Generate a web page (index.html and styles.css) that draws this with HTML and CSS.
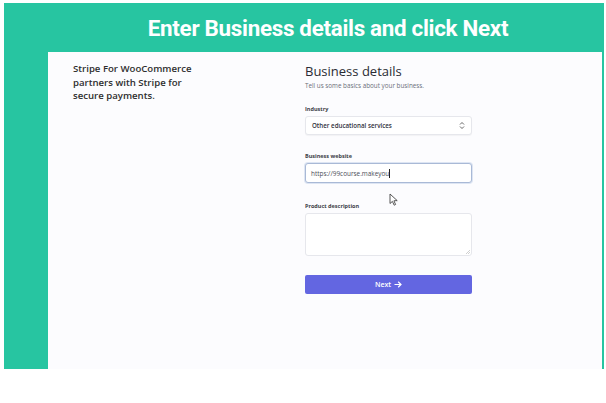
FILE: index.html
```html
<!DOCTYPE html>
<html lang="en">
<head>
    <meta charset="UTF-8">
    <title>Business details</title>
    <link rel="stylesheet" href="styles.css">
</head>
<body>
    <div class="frame">
        <!-- Banner -->
        <div class="banner">Enter Business details and click Next</div>

        <div class="frame-body">
            <div class="panel">
                <!-- Left column -->
                <div class="intro">
                    Stripe For WooCommerce partners with Stripe for secure payments.
                </div>

                <!-- Form -->
                <div class="form">
                    <h1 class="form-title">Business details</h1>
                    <p class="form-sub">Tell us some basics about your business.</p>

                    <label class="field-label">Industry</label>
                    <div class="select-box">
                        <span>Other educational services</span>
                        <svg class="select-arrows" width="6" height="9" viewBox="0 0 6 9">
                            <path d="M1 3.5 L3 1.5 L5 3.5 M1 5.5 L3 7.5 L5 5.5" fill="none" stroke="#555" stroke-width="0.9"/>
                        </svg>
                    </div>

                    <label class="field-label">Business website</label>
                    <div class="text-box focused">
                        <span>https://99course.makeyou</span><span class="caret"></span>
                    </div>

                    <label class="field-label">Product description</label>
                    <div class="text-area">
                        <svg class="grip" width="5" height="5" viewBox="0 0 5 5">
                            <path d="M1 5 L5 1 M3 5 L5 3" stroke="#bbb" stroke-width="0.7"/>
                        </svg>
                    </div>

                    <button class="next-button">Next
                        <svg width="8" height="7" viewBox="0 0 8 7">
                            <path d="M0.5 3.5 H7 M4.2 0.8 L7 3.5 L4.2 6.2" fill="none" stroke="#fff" stroke-width="1.2"/>
                        </svg>
                    </button>
                </div>

                <!-- Mouse pointer -->
                <svg class="pointer" width="10" height="13" viewBox="0 0 10 13">
                    <path d="M1 1 L1 10.5 L3.4 8.4 L5.2 12.2 L6.6 11.5 L4.9 7.8 L8.2 7.6 Z" fill="#fff" stroke="#444" stroke-width="0.9" stroke-linejoin="round"/>
                </svg>
            </div>
        </div>
    </div>
</body>
</html>
```

FILE: styles.css
```css
body {
    margin: 0;
    background-color: #ffffff;
    font-family: 'Open Sans', 'Noto Sans', sans-serif;
}
.frame {
    margin: 3px 0 0 4px;
    width: 600px;
    height: 366px;
    background-color: #27c5a1;
    display: flex;
    flex-direction: column;
}
.banner {
    height: 49px;
    display: flex;
    align-items: center;
    justify-content: center;
    padding-left: 48px;
    color: #ffffff;
    font-family: Roboto, 'Liberation Sans', sans-serif;
    font-weight: 700;
    font-size: 22.4px;
    letter-spacing: -0.3px;
    box-sizing: border-box;
}
.frame-body {
    flex: 1;
    display: flex;
    padding: 0 2px 0 44px;
}
.panel {
    flex: 1;
    position: relative; /* for the pointer */
    display: flex;
    background-color: #fcfcfe;
    padding: 10px 0 0 25px;
}
.intro {
    width: 125px;
    font-size: 9.6px;
    font-weight: 600;
    line-height: 13.5px;
    color: #2e2e2e;
}
.form {
    margin-left: 107px;
    width: 167px;
    display: flex;
    flex-direction: column;
}
.form-title {
    margin: 0;
    font-size: 13px;
    font-weight: 500;
    line-height: 18px;
    color: #2a2b33;
}
.form-sub {
    margin: 1px 0 15px;
    font-size: 6.3px;
    line-height: 9px;
    color: #6b6f7a;
}
.field-label {
    font-size: 5.5px;
    font-weight: 700;
    line-height: 8px;
    color: #3c3f48;
    margin-bottom: 3px;
}
.select-box, .text-box {
    height: 19px;
    box-sizing: border-box;
    display: flex;
    align-items: center;
    justify-content: space-between;
    padding: 0 6px;
    font-size: 6.2px;
    color: #30313d;
    background-color: #ffffff;
    border: 1px solid #e6e7ec;
    border-radius: 3px;
    box-shadow: 0 1px 1px rgba(0, 0, 0, 0.04);
    margin-bottom: 17px;
}
.select-box span {
    font-weight: 600;
}
.text-box {
    height: 20px;
    justify-content: flex-start;
    padding-left: 5px;
    font-size: 6.4px;
    border-color: #a9b9d6;
    box-shadow: 0 0 0 1px #dde5f3;
    color: #4a4d57;
    margin-bottom: 19px;
}
.caret {
    display: inline-block;
    width: 1px;
    height: 9px;
    background-color: #222;
}
.text-area {
    position: relative;
    height: 43px;
    box-sizing: border-box;
    background-color: #ffffff;
    border: 1px solid #e6e7ec;
    border-radius: 3px;
    margin-bottom: 19px;
}
.grip {
    position: absolute;
    right: 1px;
    bottom: 1px;
}
.next-button {
    height: 19px;
    border: none;
    border-radius: 2px;
    background-color: #6366e1;
    color: #ffffff;
    font-family: 'Open Sans', 'Noto Sans', sans-serif;
    font-size: 7px;
    font-weight: 600;
    display: flex;
    align-items: center;
    justify-content: center;
    gap: 3px;
    cursor: pointer;
}
.pointer {
    position: absolute;
    left: 341px;
    top: 141px;
}
```
